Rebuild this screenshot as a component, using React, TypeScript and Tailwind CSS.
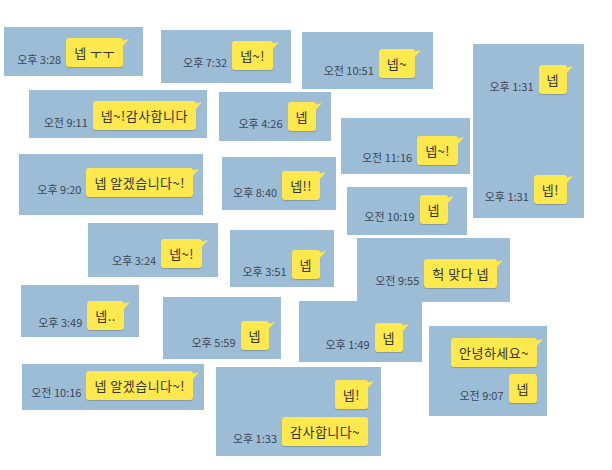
import type { ReactNode } from 'react';

type Msg = { time?: string; text: string; tail?: boolean };

interface Snip {
  box: string; // position + size + padding, written out
  layout: string;
  rows: Msg[];
}

const SNIPS: Snip[] = [
  { box: 'left-[4px] top-[27px] w-[139px] h-[49px] pr-[20px] pb-[9px]', layout: 'justify-end', rows: [{ time: '오후 3:28', text: '넵 ㅜㅜ' }] },
  { box: 'left-[161px] top-[30px] w-[130px] h-[53px] pr-[18px] pb-[13px]', layout: 'justify-end', rows: [{ time: '오후 7:32', text: '넵~!' }] },
  { box: 'left-[302px] top-[32px] w-[131px] h-[57px] pr-[18px] pb-[11px]', layout: 'justify-end', rows: [{ time: '오전 10:51', text: '넵~' }] },
  { box: 'left-[473px] top-[44px] w-[111px] h-[174px] pr-[17px] pb-[14px] pt-[21px]', layout: 'justify-between', rows: [{ time: '오후 1:31', text: '넵' }, { time: '오후 1:31', text: '넵!' }] },
  { box: 'left-[29px] top-[90px] w-[178px] h-[48px] pr-[11px] pb-[8px]', layout: 'justify-end', rows: [{ time: '오전 9:11', text: '넵~!감사합니다' }] },
  { box: 'left-[219px] top-[92px] w-[112px] h-[49px] pr-[15px] pb-[10px]', layout: 'justify-end', rows: [{ time: '오후 4:26', text: '넵' }] },
  { box: 'left-[341px] top-[118px] w-[129px] h-[56px] pr-[12px] pb-[9px]', layout: 'justify-end', rows: [{ time: '오전 11:16', text: '넵~!' }] },
  { box: 'left-[19px] top-[154px] w-[184px] h-[61px] pr-[10px] pb-[18px]', layout: 'justify-end', rows: [{ time: '오후 9:20', text: '넵 알겠습니다~!' }] },
  { box: 'left-[222px] top-[157px] w-[114px] h-[53px] pr-[16px] pb-[10px]', layout: 'justify-end', rows: [{ time: '오후 8:40', text: '넵!!' }] },
  { box: 'left-[347px] top-[187px] w-[120px] h-[48px] pr-[19px] pb-[11px]', layout: 'justify-end', rows: [{ time: '오전 10:19', text: '넵' }] },
  { box: 'left-[88px] top-[223px] w-[130px] h-[54px] pr-[16px] pb-[9px]', layout: 'justify-end', rows: [{ time: '오후 3:24', text: '넵~!' }] },
  { box: 'left-[230px] top-[230px] w-[104px] h-[57px] pr-[14px] pb-[8px]', layout: 'justify-end', rows: [{ time: '오후 3:51', text: '넵' }] },
  { box: 'left-[357px] top-[238px] w-[153px] h-[64px] pr-[13px] pb-[14px]', layout: 'justify-end', rows: [{ time: '오전 9:55', text: '헉 맞다 넵' }] },
  { box: 'left-[21px] top-[285px] w-[118px] h-[52px] pr-[15px] pb-[7px]', layout: 'justify-end', rows: [{ time: '오후 3:49', text: '넵..' }] },
  { box: 'left-[163px] top-[297px] w-[118px] h-[62px] pr-[12px] pb-[9px]', layout: 'justify-end', rows: [{ time: '오후 5:59', text: '넵' }] },
  { box: 'left-[299px] top-[301px] w-[123px] h-[61px] pr-[19px] pb-[10px]', layout: 'justify-end', rows: [{ time: '오후 1:49', text: '넵' }] },
  { box: 'left-[22px] top-[364px] w-[182px] h-[46px] pr-[11px] pb-[10px]', layout: 'justify-end', rows: [{ time: '오전 10:16', text: '넵 알겠습니다~!' }] },
  { box: 'left-[216px] top-[367px] w-[165px] h-[89px] pr-[13px] pb-[10px]', layout: 'justify-end gap-[8px]', rows: [{ text: '넵!' }, { time: '오후 1:33', text: '감사합니다~', tail: false }] },
  { box: 'left-[429px] top-[326px] w-[118px] h-[90px] pr-[10px] pb-[13px]', layout: 'justify-end gap-[7px]', rows: [{ text: '안녕하세요~' }, { time: '오전 9:07', text: '넵', tail: false }] },
];

function Bubble({ children, tail = true }: { children: ReactNode; tail?: boolean }) {
  return (
    <div className="relative rounded-[3px] bg-[#fde84d] px-[8px] py-[6px] text-[13px] leading-[17px] tracking-[0.5px] text-[#333333] shadow-[0_1px_1px_rgba(60,50,0,0.25)] whitespace-nowrap">
      {children}
      {tail && (
        <svg className="absolute -right-[6px] top-[1px]" width="8" height="10" viewBox="0 0 8 10">
          <path d="M0 2 L8 0 L0 9 Z" fill="#fde84d" />
        </svg>
      )}
    </div>
  );
}

function Row({ msg }: { msg: Msg }) {
  return (
    <div className="flex items-end justify-end gap-[5px]">
      {msg.time && <span className="mb-[2px] text-[11px] leading-none text-[#3a4757] whitespace-nowrap">{msg.time}</span>}
      <Bubble tail={msg.tail ?? true}>{msg.text}</Bubble>
    </div>
  );
}

export default function App() {
  return (
    <div
      className="relative w-[612px] h-[470px] overflow-hidden bg-white"
      style={{ fontFamily: '"Noto Sans CJK KR", "Noto Sans", sans-serif' }}
    >
      {SNIPS.map((s, i) => (
        <div key={i} className={`absolute flex flex-col items-end bg-[#9dbcd6] ${s.box} ${s.layout}`}>
          {s.rows.map((m, j) => (
            <Row key={j} msg={m} />
          ))}
        </div>
      ))}
    </div>
  );
}
